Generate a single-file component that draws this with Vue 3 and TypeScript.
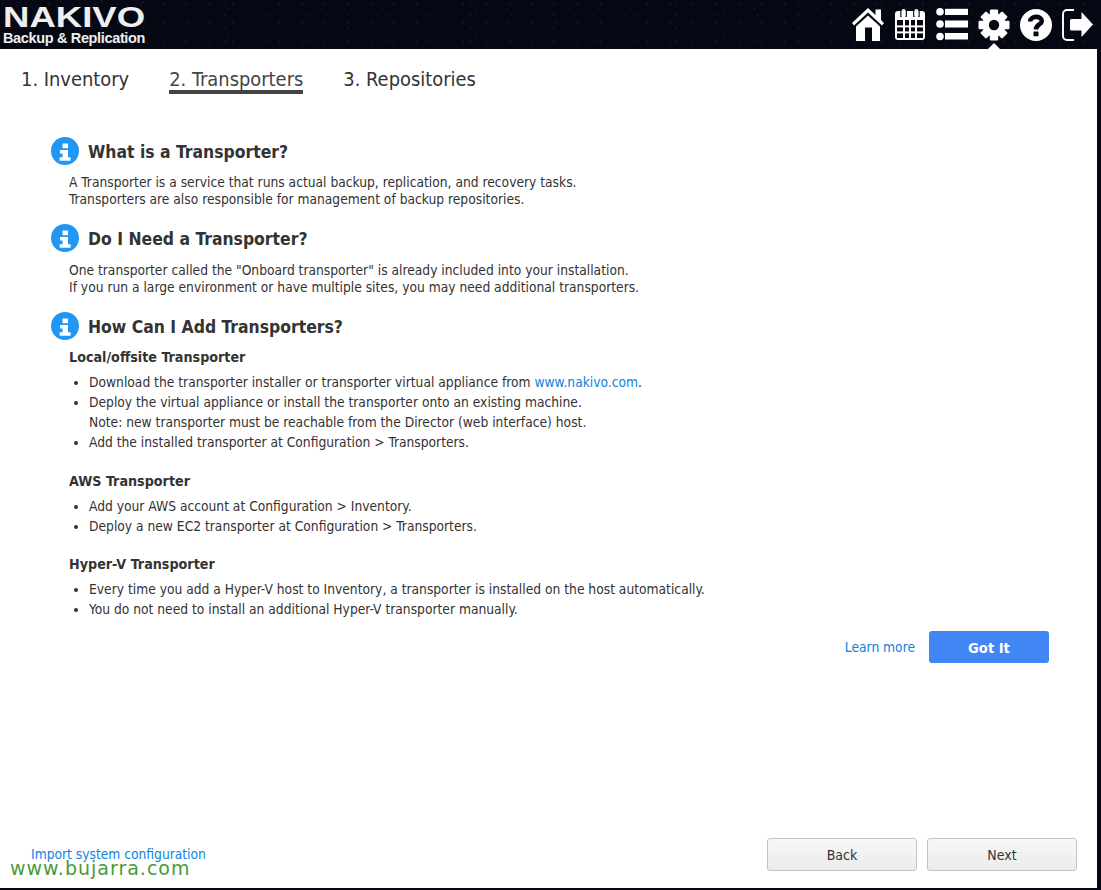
<script setup lang="ts">
const tabs = ['1. Inventory', '2. Transporters', '3. Repositories']
const teeth = [0, 45, 90, 135]
</script>

<template>
  <div class="page">
    <header class="topbar">
      <div class="logo">
        <div class="logo-name">NAKIVO</div>
        <div class="logo-sub">Backup &amp; Replication</div>
      </div>
      <nav class="icons">
        <!-- home -->
        <svg class="ic" width="32" height="34" viewBox="0 0 32 34">
          <path fill="#fff" d="M16 0 L23.5 7 V1.5 H29 V12 L32 15 L30 17.5 L16 4.5 L2 17.5 L0 15 Z" />
          <path fill="#fff" d="M16 7.5 L28 18.5 V33 H20 V19.5 H13 V33 H4 V18.5 Z" />
        </svg>
        <!-- calendar -->
        <svg class="ic" width="32" height="33" viewBox="0 0 32 33">
          <path fill="#fff" fill-rule="evenodd" d="M4 3 H28 A3 3 0 0 1 31 6 V29 A3 3 0 0 1 28 32 H4 A3 3 0 0 1 1 29 V6 A3 3 0 0 1 4 3 Z M3 12 V30 H29 V12 Z" />
          <g fill="#fff">
            <rect x="9" y="12" width="2" height="18" />
            <rect x="15" y="12" width="2" height="18" />
            <rect x="21" y="12" width="2" height="18" />
            <rect x="3" y="17.4" width="26" height="2" />
            <rect x="3" y="23.4" width="26" height="2" />
          </g>
          <path fill="none" stroke="#060812" stroke-width="1.4" d="M7 9 V3.5 A2.6 2.6 0 0 1 12.2 3.5 V9 M19.8 9 V3.5 A2.6 2.6 0 0 1 25 3.5 V9" />
          <path fill="none" stroke="#fff" stroke-width="1.6" d="M8.4 8 V3 A1.2 1.2 0 0 1 10.8 3 V8 M21.2 8 V3 A1.2 1.2 0 0 1 23.6 3 V8" />
        </svg>
        <!-- list -->
        <svg class="ic" width="32" height="33" viewBox="0 0 32 33">
          <g fill="#fff">
            <circle cx="4" cy="3.8" r="3.8" />
            <circle cx="4" cy="16" r="3.8" />
            <circle cx="4" cy="28.5" r="3.8" />
            <rect x="9" y="0.8" width="23" height="6.2" />
            <rect x="9" y="12.5" width="23" height="7" />
            <rect x="9" y="25" width="23" height="6.5" />
          </g>
        </svg>
        <!-- settings -->
        <svg class="ic" width="32" height="32" viewBox="0 0 32 32">
          <g fill="#fff">
            <rect v-for="a in teeth" :key="a" x="11.8" y="0.5" width="8.4" height="31" rx="1.2" :transform="`rotate(${a} 16 16)`" />
            <circle cx="16" cy="16" r="11.5" />
          </g>
          <circle cx="16" cy="16" r="5.2" fill="#060812" />
        </svg>
        <!-- help -->
        <svg class="ic" width="32" height="32" viewBox="0 0 32 32">
          <circle cx="16" cy="16" r="16" fill="#fff" />
          <path fill="none" stroke="#060812" stroke-width="4.6" d="M10.2 12.5 C10.2 6.4 21.8 6.4 21.8 12 C21.8 15.5 16 15.5 16 20.5" />
          <rect x="13.5" y="22.5" width="5" height="4.8" rx="0.6" fill="#060812" />
        </svg>
        <!-- logout -->
        <svg class="ic" width="31" height="32" viewBox="0 0 31 32">
          <path fill="none" stroke="#fff" stroke-width="1.9" d="M12 1 H5 A4 4 0 0 0 1 5 V27 A4 4 0 0 0 5 31 H12" />
          <path fill="#fff" d="M9.5 10 H19.5 V3 L31 15.5 L19.5 28 V21.5 H9.5 A1.5 1.5 0 0 1 8 20 V11.5 A1.5 1.5 0 0 1 9.5 10 Z" />
        </svg>
      </nav>
      <span class="pointer"></span>
    </header>

    <main class="panel">
      <div class="tabs">
        <div v-for="(t, i) in tabs" :key="t" class="tab" :class="{ active: i === 1 }">{{ t }}</div>
      </div>

      <div class="content">
        <section class="block">
          <h2 class="title">
            <svg class="info" width="28" height="28" viewBox="0 0 28 28">
              <circle cx="14" cy="14" r="14" fill="#2196f3" />
              <path fill="#fff" d="M11.5 6.5 h5.5 v4.8 h-5.5 z M9 13 h8 v7.2 h2.6 v3.6 h-11 v-3.6 h3 v-3.8 h-2.6 z" />
            </svg>
            What is a Transporter?
          </h2>
          <p class="desc">A Transporter is a service that runs actual backup, replication, and recovery tasks.<br />Transporters are also responsible for management of backup repositories.</p>
        </section>

        <section class="block need">
          <h2 class="title">
            <svg class="info" width="28" height="28" viewBox="0 0 28 28">
              <circle cx="14" cy="14" r="14" fill="#2196f3" />
              <path fill="#fff" d="M11.5 6.5 h5.5 v4.8 h-5.5 z M9 13 h8 v7.2 h2.6 v3.6 h-11 v-3.6 h3 v-3.8 h-2.6 z" />
            </svg>
            Do I Need a Transporter?
          </h2>
          <p class="desc">One transporter called the "Onboard transporter" is already included into your installation.<br />If you run a large environment or have multiple sites, you may need additional transporters.</p>
        </section>

        <section class="block">
          <h2 class="title">
            <svg class="info" width="28" height="28" viewBox="0 0 28 28">
              <circle cx="14" cy="14" r="14" fill="#2196f3" />
              <path fill="#fff" d="M11.5 6.5 h5.5 v4.8 h-5.5 z M9 13 h8 v7.2 h2.6 v3.6 h-11 v-3.6 h3 v-3.8 h-2.6 z" />
            </svg>
            How Can I Add Transporters?
          </h2>
          <h3 class="sub">Local/offsite Transporter</h3>
          <ul class="list">
            <li>Download the transporter installer or transporter virtual appliance from <a class="link">www.nakivo.com</a>.</li>
            <li>Deploy the virtual appliance or install the transporter onto an existing machine.<br />Note: new transporter must be reachable from the Director (web interface) host.</li>
            <li>Add the installed transporter at Configuration &gt; Transporters.</li>
          </ul>
          <h3 class="sub">AWS Transporter</h3>
          <ul class="list">
            <li>Add your AWS account at Configuration &gt; Inventory.</li>
            <li>Deploy a new EC2 transporter at Configuration &gt; Transporters.</li>
          </ul>
          <h3 class="sub">Hyper-V Transporter</h3>
          <ul class="list">
            <li>Every time you add a Hyper-V host to Inventory, a transporter is installed on the host automatically.</li>
            <li>You do not need to install an additional Hyper-V transporter manually.</li>
          </ul>
        </section>

        <div class="actions">
          <a class="link learn">Learn more</a>
          <button class="got">Got It</button>
        </div>
      </div>

      <footer class="footer">
        <a class="link import">Import system configuration</a>
        <div class="nav-btns">
          <button class="btn">Back</button>
          <button class="btn">Next</button>
        </div>
      </footer>
      <div class="watermark">www.bujarra.com</div>
    </main>
  </div>
</template>

<style>
html, body { margin: 0; background: #050812; }
</style>

<style scoped>
.page {
  width: 1101px;
  height: 890px;
  overflow: hidden;
  display: flex;
  flex-direction: column;
  font-family: "DejaVu Sans Condensed", "DejaVu Sans", sans-serif;
  font-stretch: condensed;
  color: #333;
  background: #050812;
}

.topbar {
  position: relative;
  height: 49px;
  flex: none;
  display: flex;
  justify-content: space-between;
  background-color: #050812;
  background-image:
    radial-gradient(circle at 3px 4px, #1a1d26 0.5px, transparent 1px),
    radial-gradient(circle at 11px 9px, #14171f 0.5px, transparent 1px),
    radial-gradient(circle at 20px 2px, #181b24 0.5px, transparent 1px);
  background-size: 23px 19px, 31px 27px, 41px 13px;
}

.logo {
  padding: 4px 0 0 3px;
  color: #eee;
  font-family: "Liberation Sans", Arial, sans-serif;
  font-stretch: normal;
}

.logo-name {
  font-size: 29px;
  line-height: 27px;
  font-weight: bold;
  transform: scaleX(1.26);
  transform-origin: left;
}

.logo-sub {
  font-size: 14.5px;
  line-height: 15px;
  font-weight: bold;
  letter-spacing: -0.35px;
  white-space: nowrap;
}

.icons {
  display: flex;
  align-items: center;
  gap: 10px;
  padding-right: 8px;
}

.pointer {
  position: absolute;
  left: 988px;
  bottom: 0;
  border-left: 6px solid transparent;
  border-right: 6px solid transparent;
  border-bottom: 6px solid #fff;
}

.panel {
  position: relative;
  flex: none;
  width: 1097px;
  height: 839px;
  background: #fff;
  display: flex;
  flex-direction: column;
}

.tabs {
  display: flex;
  gap: 40px;
  padding: 17px 0 0 21px;
  height: 28px;
}

.tab {
  font-size: 19.9px;
  line-height: 27px;
  height: 24px;
  color: #333;
}

.tab.active {
  border-bottom: 4px solid #444;
  color: #444;
}

.content {
  padding: 43px 0 0 51px;
  flex: 1;
}

.block + .block {
  margin-top: 16px;
}

.title {
  margin: 0;
  display: flex;
  align-items: flex-start;
  gap: 9px;
  height: 28px;
  font-size: 17.4px;
  line-height: 30px;
  font-weight: bold;
  color: #333;
}

.info {
  flex: none;
}

.desc {
  margin: 9px 0 0 18px;
  font-size: 13.7px;
  line-height: 17px;
}

.need .desc {
  margin-top: 10px;
}

.sub {
  margin: 9px 0 0 18px;
  font-size: 14.2px;
  line-height: 17px;
  font-weight: bold;
}

.list {
  list-style: disc;
  margin: 6px 0 20.5px 38px;
  padding: 0;
  font-size: 13.7px;
  line-height: 20px;
}

.list:last-child {
  margin-bottom: 0;
}

.link {
  color: #0d84e3;
}

.actions {
  display: flex;
  justify-content: flex-end;
  align-items: center;
  gap: 14px;
  padding-right: 48px;
  margin-top: 12px;
}

.learn {
  font-size: 13.7px;
}

.got {
  width: 120px;
  height: 32px;
  border: none;
  border-radius: 3px;
  background: #4285f4;
  color: #fff;
  font-family: inherit;
  font-stretch: condensed;
  font-size: 14.6px;
  font-weight: bold;
}

.footer {
  display: flex;
  justify-content: space-between;
  padding: 0 20px 17px 31px;
  align-items: center;
}

.import {
  font-size: 13.7px;
  margin-top: -2px;
}

.nav-btns {
  display: flex;
  gap: 10px;
}

.btn {
  width: 150px;
  height: 33px;
  border: 1px solid #c4c4c4;
  border-radius: 3px;
  background: linear-gradient(#f8f8f8, #ebebeb);
  color: #333;
  font-family: inherit;
  font-stretch: condensed;
  font-size: 14px;
}

.watermark {
  position: absolute;
  left: 10px;
  top: 809px;
  font-family: "DejaVu Sans", sans-serif;
  font-stretch: normal;
  font-size: 19px;
  line-height: 20px;
  letter-spacing: 1px;
  color: #4a9a3a;
}
</style>
